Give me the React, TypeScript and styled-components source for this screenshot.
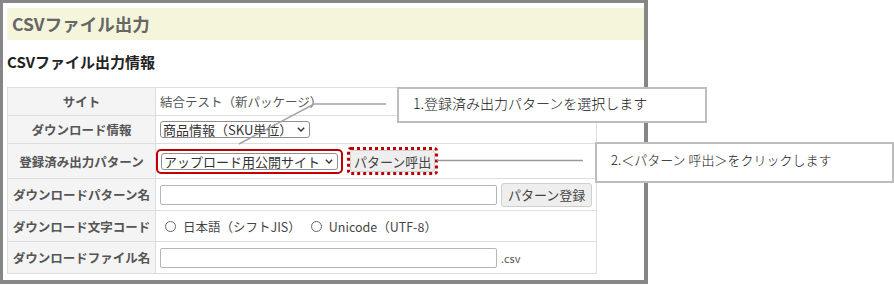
import { createGlobalStyle, styled } from "styled-components";

const GlobalStyle = createGlobalStyle`
  html, body {
    margin: 0;
    padding: 0;
    background: #ffffff;
  }

  body {
    font-family: "Noto Sans CJK JP", "Noto Sans", sans-serif;
    color: #333;
  }
`;

const Page = styled.div`
  position: relative;
  width: 894px;
  height: 286px;
  overflow: hidden;
`;

const Frame = styled.div`
  box-sizing: border-box;
  width: 648px;
  height: 284px;
  padding: 5px 0 7px 4px;

  border: 3px solid #868686;
  border-right-width: 4px;
  border-bottom-width: 4px;
`;

const Header = styled.div`
  height: 32px;
  padding-left: 5px;

  display: flex;
  align-items: center;

  background: #f5f5dc;
`;

const HeaderTitle = styled.h1`
  margin: 0;

  color: #666;
  font-size: 17.5px;
  font-weight: 700;
  line-height: 1;
`;

const SectionTitle = styled.h2`
  margin: 11px 0 14px;

  color: #222;
  font-size: 15px;
  font-weight: 700;
  line-height: 22px;
`;

const Table = styled.table`
  width: 590px;
  border-collapse: collapse;
  table-layout: fixed;
`;

const Row = styled.tr<{ $h: number }>`
  height: ${(props) => props.$h}px;
`;

const LabelCell = styled.th`
  width: 148px;
  box-sizing: border-box;
  padding: 0;

  background: #f4f4f4;
  border: 1px solid #dddddd;

  color: #555;
  font-size: 12.5px;
  font-weight: 700;
  text-align: center;
  vertical-align: middle;
  white-space: nowrap;
`;

const ValueCell = styled.td`
  padding: 0 0 0 4px;

  border: 1px solid #dddddd;

  color: #555;
  font-size: 12.5px;
  vertical-align: middle;
`;

const CellLine = styled.div`
  display: flex;
  align-items: center;
  gap: 4px;
`;

const SelectBox = styled.span`
  box-sizing: border-box;
  height: 17px;
  padding: 0 4px 0 2px;

  display: inline-flex;
  align-items: center;
  gap: 5px;

  border: 1px solid #8f8f8f;
  border-radius: 3px;
  background: #fff;

  color: #333;
  font-size: 13px;
  line-height: 1;
  white-space: nowrap;
`;

const Chevron = () => (
  <svg width="8" height="5" viewBox="0 0 8 5">
    <path d="M0.8 0.8 L4 4 L7.2 0.8" fill="none" stroke="#333" strokeWidth="1.4" />
  </svg>
);

const Highlight = styled.span`
  margin-left: -4px;
  padding: 2px 3px 2px 3px;

  display: inline-flex;

  border: 2px solid #c00000;
  border-radius: 5px;
`;

const DottedHighlight = styled.span`
  display: inline-flex;

  border: 3px dotted #c00000;
  border-radius: 4px;
`;

const Button = styled.button<{ $h: number; $px: number }>`
  box-sizing: border-box;
  height: ${(props) => props.$h}px;
  padding: 0 ${(props) => props.$px}px;

  background: #eeeeee;
  border: 1px solid #cfcfcf;
  border-radius: 3px;

  color: #444;
  font-family: inherit;
  font-size: 13px;
  white-space: nowrap;
`;

const TextInput = styled.input`
  box-sizing: border-box;
  width: 337px;
  height: 20px;
  margin: 0;

  border: 1px solid #b5b5b5;
  border-radius: 2px;
`;

const Suffix = styled.span`
  color: #555;
  font-size: 11px;
`;

const RadioGroup = styled.div`
  padding-left: 5px;

  display: flex;
  align-items: center;
  gap: 10px;
`;

const RadioOption = styled.label`
  display: inline-flex;
  align-items: center;
  gap: 7px;

  color: #444;
  font-size: 12.5px;
`;

const RadioCircle = styled.span`
  box-sizing: border-box;
  width: 11px;
  height: 11px;

  border: 1px solid #666;
  border-radius: 50%;
`;

const Connectors = styled.svg`
  position: absolute;
  left: 0;
  top: 0;
  pointer-events: none;
`;

const Callout = styled.div<{
  $x: number;
  $y: number;
  $w: number;
  $h: number;
  $pt: number;
  $fs: number;
}>`
  position: absolute;
  left: ${(props) => props.$x}px;
  top: ${(props) => props.$y}px;
  box-sizing: border-box;
  width: ${(props) => props.$w}px;
  height: ${(props) => props.$h}px;
  padding: ${(props) => props.$pt}px 0 0 14px;

  background: #fff;
  border: 2px solid #bdbdbd;

  color: #111;
  font-size: ${(props) => props.$fs}px;
  font-weight: 300;
  line-height: 18px;
  white-space: nowrap;
`;

const App = () => {
  return (
    <Page>
      <GlobalStyle />
      <Frame>
        <Header>
          <HeaderTitle>CSVファイル出力</HeaderTitle>
        </Header>
        <SectionTitle>CSVファイル出力情報</SectionTitle>
        <Table>
          <tbody>
            <Row $h={28}>
              <LabelCell>サイト</LabelCell>
              <ValueCell>結合テスト（新パッケージ）</ValueCell>
            </Row>
            <Row $h={28}>
              <LabelCell>ダウンロード情報</LabelCell>
              <ValueCell>
                <SelectBox>
                  商品情報（SKU単位）
                  <Chevron />
                </SelectBox>
              </ValueCell>
            </Row>
            <Row $h={35}>
              <LabelCell>登録済み出力パターン</LabelCell>
              <ValueCell>
                <CellLine>
                  <Highlight>
                    <SelectBox>
                      アップロード用公開サイト
                      <Chevron />
                    </SelectBox>
                  </Highlight>
                  <DottedHighlight>
                    <Button $h={22} $px={3}>
                      パターン呼出
                    </Button>
                  </DottedHighlight>
                </CellLine>
              </ValueCell>
            </Row>
            <Row $h={32}>
              <LabelCell>ダウンロードパターン名</LabelCell>
              <ValueCell>
                <CellLine>
                  <TextInput type="text" />
                  <Button $h={24} $px={6}>
                    パターン登録
                  </Button>
                </CellLine>
              </ValueCell>
            </Row>
            <Row $h={31}>
              <LabelCell>ダウンロード文字コード</LabelCell>
              <ValueCell>
                <RadioGroup>
                  <RadioOption>
                    <RadioCircle />
                    日本語（シフトJIS）
                  </RadioOption>
                  <RadioOption>
                    <RadioCircle />
                    Unicode（UTF-8）
                  </RadioOption>
                </RadioGroup>
              </ValueCell>
            </Row>
            <Row $h={32}>
              <LabelCell>ダウンロードファイル名</LabelCell>
              <ValueCell>
                <CellLine>
                  <TextInput type="text" />
                  <Suffix>.csv</Suffix>
                </CellLine>
              </ValueCell>
            </Row>
          </tbody>
        </Table>
      </Frame>

      <Connectors width="894" height="286">
        <path d="M239 144 L314 104 L386 104" fill="none" stroke="#a3a3a3" strokeWidth="1.5" />
        <path d="M437 160.5 L583 160.5" fill="none" stroke="#9a9a9a" strokeWidth="1.5" />
      </Connectors>

      <Callout $x={397} $y={87} $w={310} $h={36} $pt={5} $fs={14}>
        1.登録済み出力パターンを選択します
      </Callout>
      <Callout $x={595} $y={142} $w={299} $h={41} $pt={7} $fs={13}>
        2.＜パターン 呼出＞をクリックします
      </Callout>
    </Page>
  );
};

export default App;
